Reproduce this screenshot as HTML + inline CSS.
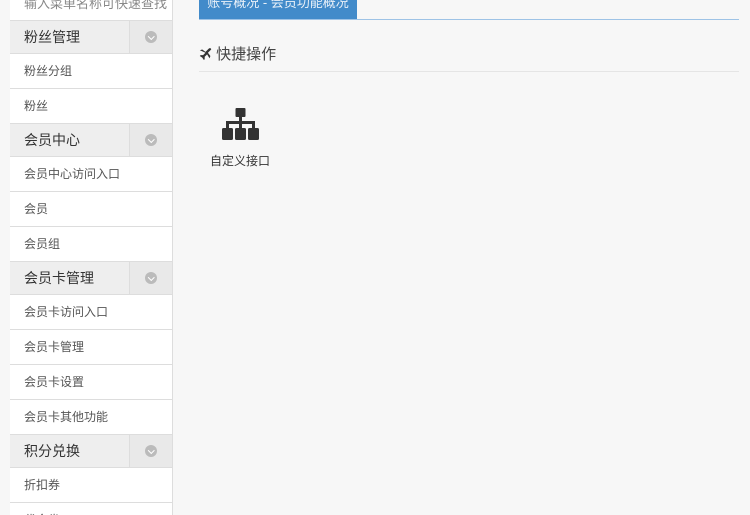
<!DOCTYPE html>
<html><head><meta charset="utf-8"><style>
*{margin:0;padding:0;box-sizing:border-box}
html,body{width:750px;height:515px;overflow:hidden}
body{background:#f7f7f7;font-family:"Liberation Sans","Noto Sans CJK SC",sans-serif;position:relative}
.sb{position:absolute;left:10px;top:0;width:163px;height:515px;border-right:1px solid #ddd;background:#fff;overflow:hidden}
.search{height:21px;border-bottom:1px solid #ddd;font-size:13px;color:#888;padding-left:14px;line-height:8px;overflow:hidden}
.h{height:33px;background:#eee;border-bottom:1px solid #ddd;position:relative;font-size:14px;color:#333;line-height:32px;padding-left:14px}
.h .c{position:absolute;left:119px;top:0;width:43px;height:32px;border-left:1px solid #ddd;background:#e9e9e9}
.h .c i{position:absolute;left:15px;top:10px;width:12px;height:12px;border-radius:50%;background:#bbb}
.h .c i:after{content:"";position:absolute;left:3.5px;top:2.5px;width:3.5px;height:3.5px;border-right:1.5px solid #fff;border-bottom:1.5px solid #fff;transform:rotate(45deg)}
.it{height:35px;border-bottom:1px solid #ddd;font-size:12px;color:#555;line-height:34px;padding-left:14px}
.tab{position:absolute;left:199px;top:0;width:158px;height:19px;background:#428bca;color:#e8f0f8;font-size:13px;text-align:center;line-height:6px;overflow:hidden}
.tl{position:absolute;left:199px;top:19px;width:540px;height:1px;background:#9ec3e6}
.t{position:absolute;left:199px;top:43px;font-size:15px;color:#444}
.hl{position:absolute;left:199px;top:71px;width:540px;height:1px;background:#e5e5e5}
.lb{position:absolute;left:200px;top:152px;width:80px;text-align:center;font-size:12px;color:#333}
</style></head><body>
<div class="sb">
<div class="search">输入菜单名称可快速查找</div>
<div class="h">粉丝管理<div class="c"><i></i></div></div>
<div class="it">粉丝分组</div><div class="it">粉丝</div>
<div class="h">会员中心<div class="c"><i></i></div></div>
<div class="it">会员中心访问入口</div><div class="it">会员</div><div class="it">会员组</div>
<div class="h">会员卡管理<div class="c"><i></i></div></div>
<div class="it">会员卡访问入口</div><div class="it">会员卡管理</div><div class="it">会员卡设置</div><div class="it">会员卡其他功能</div>
<div class="h">积分兑换<div class="c"><i></i></div></div>
<div class="it">折扣券</div><div class="it">代金券</div>
</div>
<div class="tab">账号概况 - 会员功能概况</div>
<div class="tl"></div>
<div class="t"><svg width="13" height="13" viewBox="0 0 16 16" style="vertical-align:-1px"><path d="M1 4l3-1 4 3 4-4c1-1 3-1 3 1l-4 4 3 4-1 3-3-5-3 3v3l-1 1-2-3-3-2 1-1h3l3-3z" fill="#333"/></svg> 快捷操作</div>
<div class="hl"></div>
<svg style="position:absolute;left:222px;top:108px" width="37" height="32" viewBox="0 0 37 32"><rect x="13.5" y="0" width="10" height="9" rx="1" fill="#333"/><rect x="17" y="8" width="3" height="6" fill="#333"/><rect x="4" y="13" width="29" height="3" fill="#333"/><rect x="4" y="13" width="3" height="9" fill="#333"/><rect x="17" y="13" width="3" height="9" fill="#333"/><rect x="30" y="13" width="3" height="9" fill="#333"/><rect x="0" y="20" width="11" height="12" rx="1.5" fill="#333"/><rect x="13" y="20" width="11" height="12" rx="1.5" fill="#333"/><rect x="26" y="20" width="11" height="12" rx="1.5" fill="#333"/></svg>
<div class="lb">自定义接口</div>
</body></html>
